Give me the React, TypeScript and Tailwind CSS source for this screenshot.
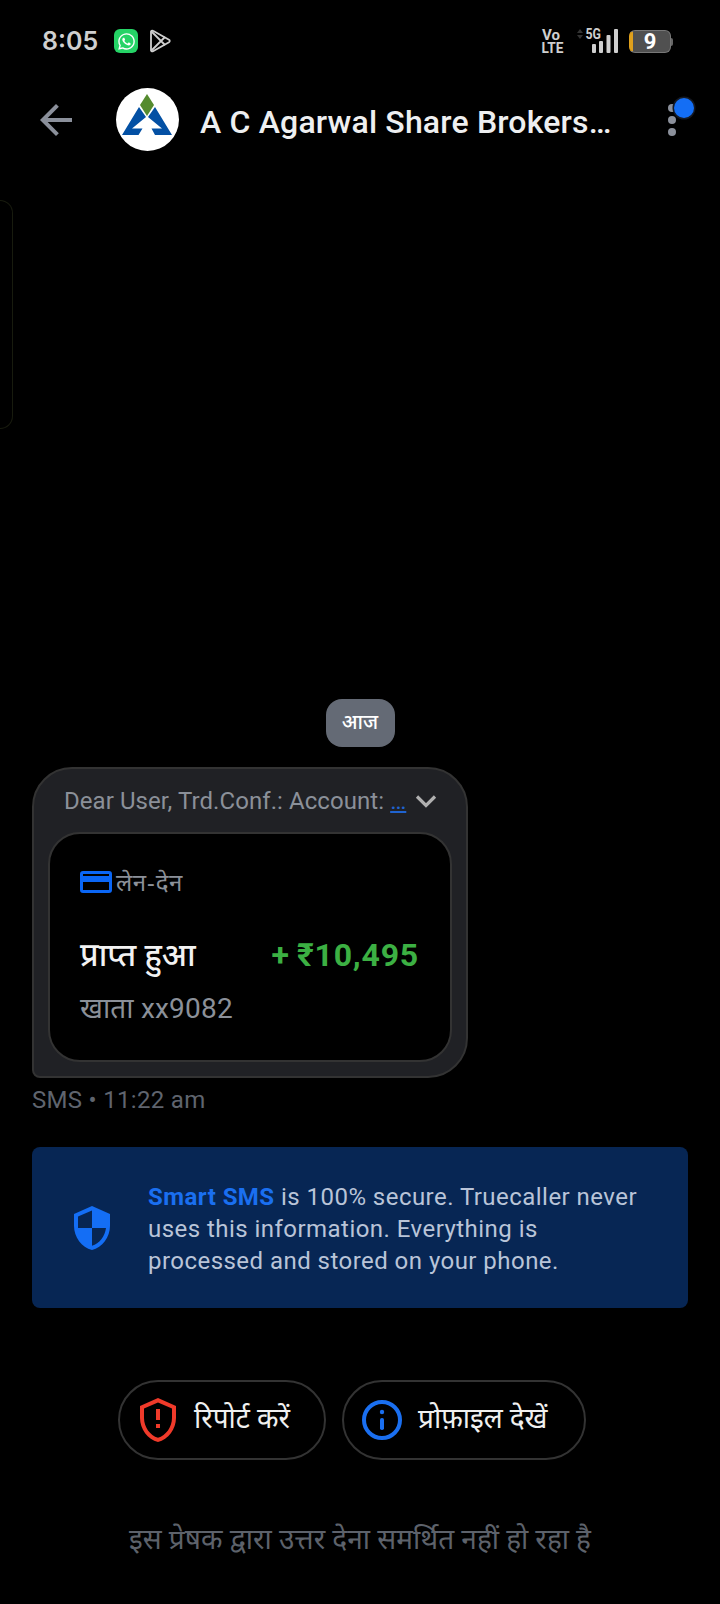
import type { ReactNode } from "react";
import { FaWhatsapp } from "react-icons/fa";

function StatusBar() {
  return (
    <div className="flex h-20 items-center pl-[42px] pr-[47px] pt-[2px] text-[#cfcfcf]">
      <span className="w-[72px] pt-px font-['Inter'] text-[25px] font-semibold leading-none">8:05</span>
      <span className="flex h-6 w-6 items-center justify-center rounded-md bg-[#25d366]">
        <FaWhatsapp className="h-[19px] w-[19px] text-white" />
      </span>
      <svg className="ml-3 h-6 w-6" viewBox="0 0 24 24" fill="none" stroke="#cfcfcf" strokeWidth="1.8" strokeLinejoin="round" strokeLinecap="round">
        <path d="M1 3v18c0 1.300 1 1.800 2 1.200l16-9c1-.600 1-1.800 0-2.400L3 1.800C2 1.200 1 1.700 1 3z" />
        <path d="M1.500 2.500 14.500 15.500M1.500 21.500 14.500 8.500" />
      </svg>

      <div className="ml-auto flex h-6">
        <svg className="h-6 w-[35px] overflow-visible" viewBox="0 0 35 24" fill="#cfcfcf">
          <text x="0" y="10.800" className="font-['Roboto'] text-[15px] font-bold" textLength="18" lengthAdjust="spacingAndGlyphs">
            Vo
          </text>
          <text x="-0.500" y="24" className="font-['Roboto'] text-[15px] font-bold" textLength="22" lengthAdjust="spacingAndGlyphs">
            LTE
          </text>
        </svg>
        <svg className="h-6 w-[42px] overflow-visible" viewBox="0 0 42 24" fill="#cfcfcf">
          <path d="M0 4h6L3 0zM0 6h6L3 10z" fill="#333" />
          <text x="8.500" y="10" className="font-['Roboto'] text-[15px] font-bold" textLength="15.500" lengthAdjust="spacingAndGlyphs">
            5G
          </text>
          <rect x="15" y="15" width="4" height="9" rx="1" />
          <rect x="22" y="12" width="4" height="12" rx="1" />
          <rect x="29.500" y="6" width="4" height="18" rx="1" />
          <rect x="37" y="0" width="4" height="24" rx="1" />
        </svg>
        <div className="ml-[10px] mt-px flex items-center">
          <div className="flex h-[23px] w-[42px] items-center justify-center overflow-hidden rounded-md border border-[#777] border-l-[#dfa01c] bg-[linear-gradient(90deg,#dfa01c_3px,#505050_3px)] pt-px font-['Roboto'] text-[22px] font-bold leading-none text-white">
            9
          </div>
          <div className="h-2 w-[2px] rounded-r bg-[#666]" />
        </div>
      </div>
    </div>
  );
}

function BrokerLogo() {
  return (
    <svg className="h-[63px] w-[63px]" viewBox="0 0 63 63">
      <circle cx="31.500" cy="31.500" r="31.500" fill="#fff" />
      <path d="M31 6 38 17 31 28 24 17z" fill="#558b2f" />
      <path d="M23 19 30 29 16 40.500h10.500L22.500 47H6z" fill="#0350a4" />
      <path d="M39 19 32 29 46 40.500H35.500L39 47h17z" fill="#0350a4" />
    </svg>
  );
}

function Header() {
  return (
    <header className="flex h-20 items-center pl-8">
      <svg className="h-12 w-12" viewBox="0 0 24 24" fill="#8b909b">
        <path d="M20 11H7.830l5.590-5.590L12 4l-8 8 8 8 1.410-1.410L7.830 13H20v-2z" />
      </svg>
      <div className="mb-px ml-9">
        <BrokerLogo />
      </div>
      <h1 className="ml-[21px] mt-1 w-[430px] whitespace-nowrap text-[32px] font-medium leading-10 tracking-[0.17px] text-[#eeeff0]">
        A C Agarwal Share Brokers…
      </h1>
      <svg className="ml-5 h-12 w-12" viewBox="0 0 48 48" fill="#8b909b">
        <circle cx="22" cy="12" r="4" />
        <circle cx="22" cy="24" r="4" />
        <circle cx="22" cy="36" r="4" />
        <circle cx="34" cy="12" r="11.500" fill="#151922" />
        <circle cx="34" cy="12" r="10" fill="#146ef5" />
      </svg>
    </header>
  );
}

function MessageBubble() {
  return (
    <section className="flex h-[311px] w-[436px] flex-col rounded-[40px] rounded-bl-lg border-2 border-[#333] bg-[#202125] px-[14px]">
      <div className="flex h-[63px] items-center pl-4 text-[24px] text-[#8b9099]">
        <span className="w-[326px] whitespace-nowrap tracking-[0.07px]">
          Dear User, Trd.Conf.: Account: <span className="text-[#1f63d0] underline">…</span>
        </span>
        <svg className="ml-[24px] h-4 w-6" viewBox="0 0 24 16" fill="none" stroke="#b0b0b0" strokeWidth="3.200">
          <path d="M3 3.500 12 12.500 21 3.500" />
        </svg>
      </div>
      <div className="h-[230px] rounded-[32px] border-2 border-[#333] bg-black px-[30px]">
        <div className="flex h-[96px] items-center gap-1 text-[24px] tracking-[0.5px] text-[#8b9099]">
          <svg className="h-[22px] w-8" viewBox="0 0 32 22" fill="none" stroke="#0a66f5">
            <rect x="1.500" y="1.500" width="29" height="19" rx="1.500" strokeWidth="3" />
            <path d="M1 8h30" strokeWidth="6" />
          </svg>
          <span>
            लेन<span className="px-[0.500px] font-['Noto_Sans']">-</span>देन
          </span>
        </div>
        <div className="flex h-[50px] items-center justify-between text-[32px]">
          <span className="font-medium tracking-[0.1px] text-[#f2f2f2]">प्राप्त हुआ</span>
          <span className="mr-px font-bold text-[#3cb043]">
            + <span className="tracking-[0.8px]">₹10,495</span>
          </span>
        </div>
        <div className="flex h-[58px] items-center text-[28px] tracking-[0.2px] text-[#8b9099]">खाता xx9082</div>
      </div>
    </section>
  );
}

function SecureBanner() {
  return (
    <section className="flex h-[161px] items-center rounded-lg bg-[#072654] pl-9">
      <svg className="h-12 w-12" viewBox="0 0 24 24" fill="#146ef5">
        <path d="M12 1 3 5v6c0 5.550 3.840 10.740 9 12 5.160-1.260 9-6.450 9-12V5l-9-4zm0 10.990h7c-.530 4.120-3.280 7.790-7 8.940V12H5V6.300l7-3.110v8.800z" />
      </svg>
      <p className="ml-8 whitespace-nowrap pt-[2px] text-[24px] leading-8 tracking-[0.46px] text-[#b9c4d8]">
        <span className="font-bold text-[#1a6ff0]">Smart SMS</span> is 100% secure. Truecaller never
        <br />
        uses this information. Everything is
        <br />
        processed and stored on your phone.
      </p>
    </section>
  );
}

interface ActionButtonProps {
  icon: ReactNode;
  label: string;
  className: string;
}

function ActionButton({ icon, label, className }: ActionButtonProps) {
  return (
    <button className={`flex h-20 items-center whitespace-nowrap rounded-full border-2 border-[#333] pl-[14px] text-[28px] text-[#f0f0f0] ${className}`}>
      {icon}
      <span className="pb-[2px]">{label}</span>
    </button>
  );
}

export default function App() {
  return (
    <main className="h-[1604px] w-[720px] overflow-hidden bg-black font-['Roboto','Noto_Sans',sans-serif]">
      <StatusBar />
      <Header />

      {/* edge panel handle */}
      <div className="mt-10 h-[229px] w-[13px] rounded-r-[14px] border border-l-0 border-[#181b0e]" />

      <div className="mt-[270px] flex justify-center">
        <span className="flex h-12 w-[69px] items-center justify-center rounded-2xl bg-[#646a75] pb-[2px] text-[20px] font-medium text-white">
          आज
        </span>
      </div>

      <div className="mt-5 px-8">
        <MessageBubble />
        <p className="mt-1 h-[65px] text-[24px] leading-[36px] tracking-[0.3px] text-[#5f646e]">SMS • 11:22 am</p>
        <SecureBanner />
      </div>

      <div className="mt-[72px] flex gap-4 pl-[118px]">
        <ActionButton
          className="w-[208px]"
          label="रिपोर्ट करें"
          icon={
            <svg className="mr-3 h-12 w-12 shrink-0" viewBox="0 0 24 24" fill="#f03a2a">
              <path fillRule="evenodd" d="M12 1 3 5v6c0 5.550 3.840 10.740 9 12 5.160-1.260 9-6.450 9-12V5l-9-4zm7 10c0 4.520-2.980 8.690-7 9.930-4.020-1.240-7-5.410-7-9.930V6.300l7-3.110 7 3.110V11z" />
              <path d="M11 6.500h2V12h-2zM11 14h2v2h-2z" />
            </svg>
          }
        />
        <ActionButton
          className="w-[244px]"
          label="प्रोफ़ाइल देखें"
          icon={
            <svg className="mr-3 h-12 w-12 shrink-0" viewBox="0 0 24 24" fill="#1a6ff0">
              <circle cx="12" cy="12" r="9" fill="none" stroke="#1a6ff0" strokeWidth="2" />
              <circle cx="12" cy="8" r="1.100" />
              <rect x="11" y="11" width="2" height="6" rx="0.900" />
            </svg>
          }
        />
      </div>

      <p className="mt-[59px] text-center text-[28px] leading-[42px] tracking-[0.08px] text-[#5d626b]">
        इस प्रेषक द्वारा उत्तर देना समर्थित नहीं हो रहा है
      </p>
    </main>
  );
}
